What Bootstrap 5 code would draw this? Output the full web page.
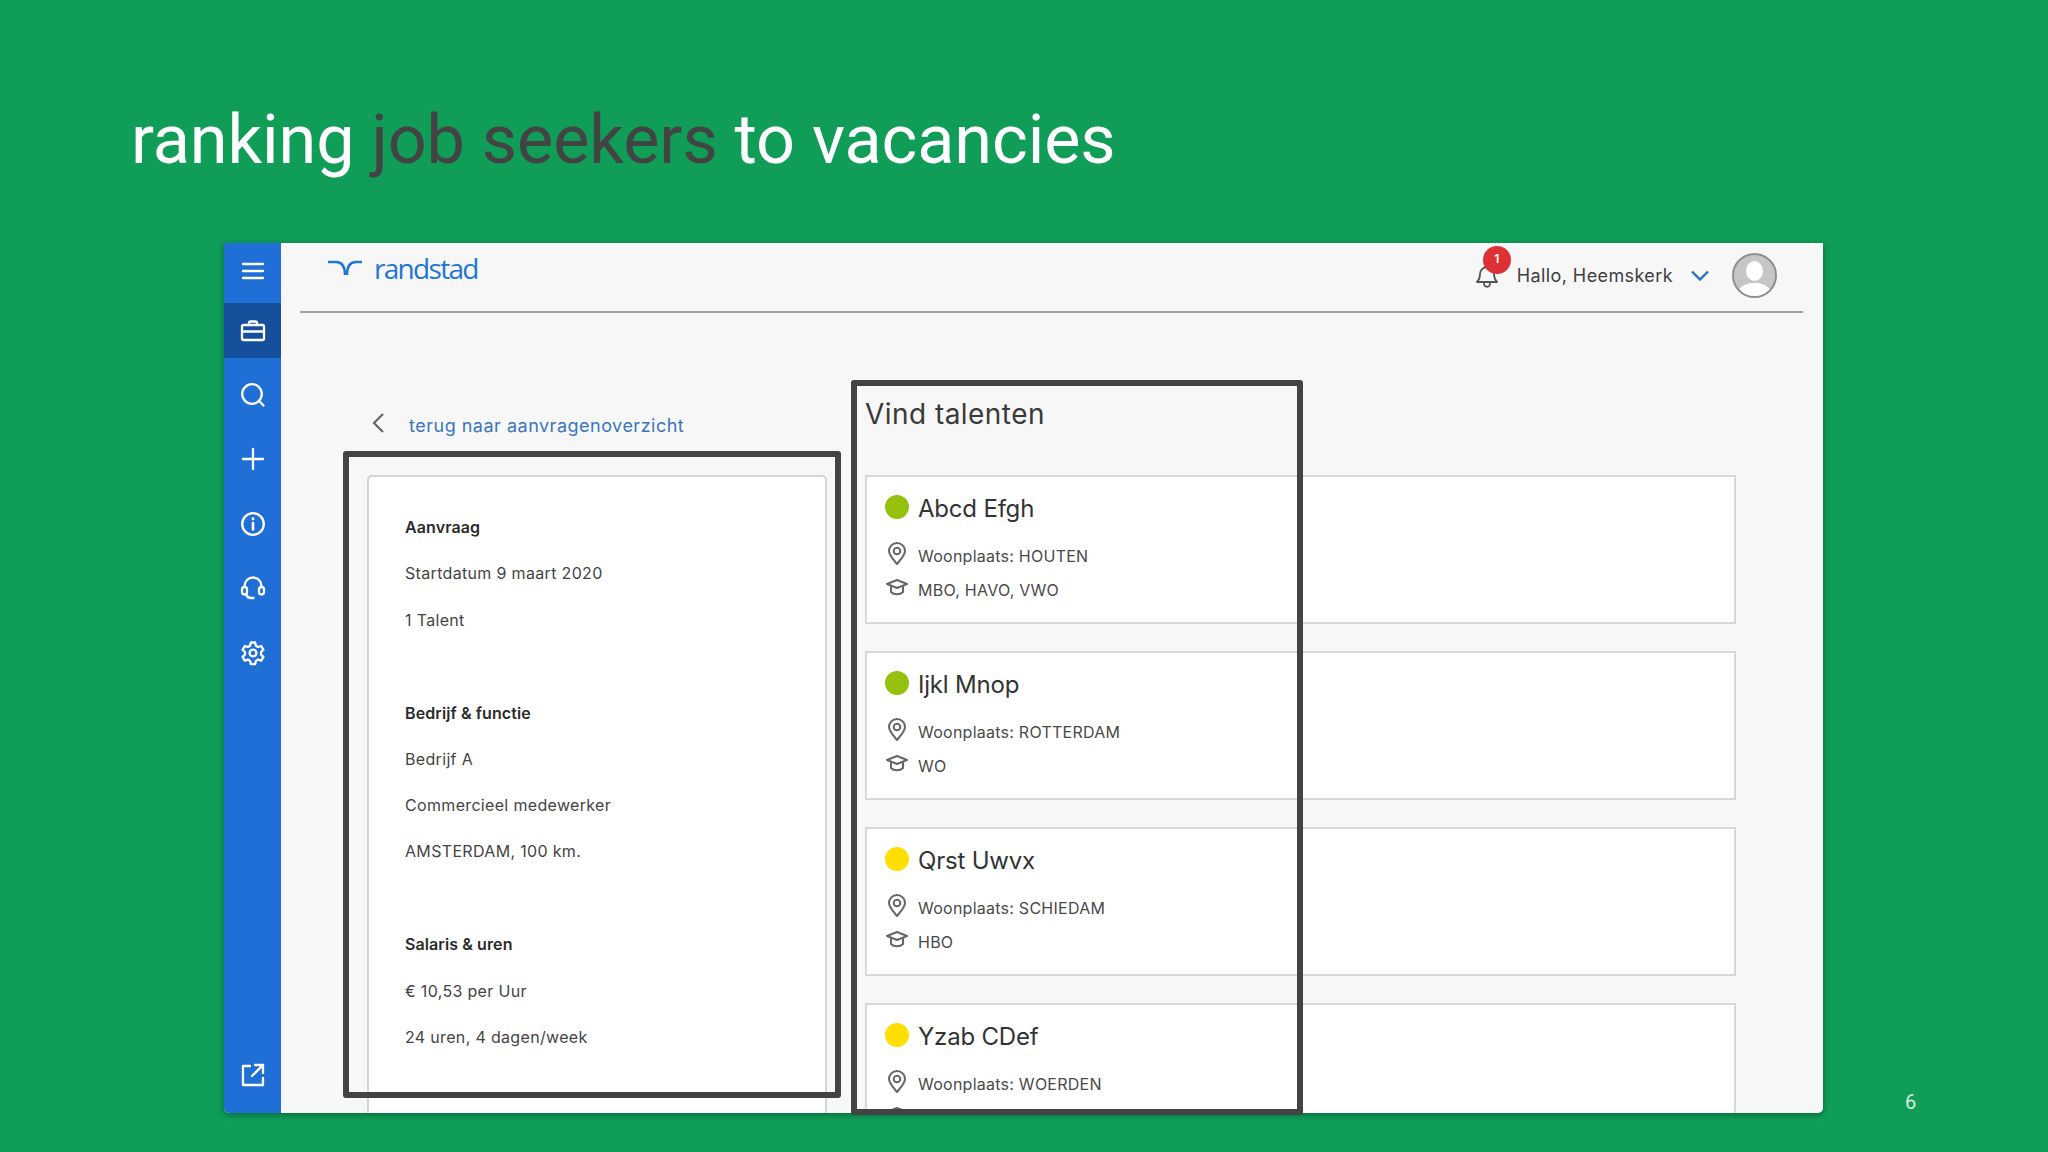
<!DOCTYPE html>
<html lang="nl">
<head>
<meta charset="utf-8">
<title>ranking job seekers to vacancies</title>
<link href="https://cdn.jsdelivr.net/npm/bootstrap@5.3.0/dist/css/bootstrap.min.css" rel="stylesheet">
<style>
html,body{margin:0;width:2048px;height:1152px;overflow:hidden}
body{background:#0f9d58;font-family:Inter,"Liberation Sans",sans-serif;color:#444}
.slide-title{font-family:Roboto,"Liberation Sans",sans-serif;font-weight:400;font-size:68.4px;line-height:84px;color:#fff;margin:0;padding:98px 0 0 131px;letter-spacing:-.1px}
.slide-title span{color:#434343}
.stage{padding:61px 0 0 224px;align-items:flex-end}
.win-wrap{position:relative;width:1599px;height:870px;flex:none}
.app-win{width:100%;height:100%;background:#f7f7f7;overflow:hidden;border-radius:0 0 5px 5px;box-shadow:0 2px 6px rgba(0,0,0,.35)}
.side-rail{width:57px;flex:none;background:#1f6fd6}
.rail-item{height:64.5px;flex:none;display:flex;align-items:center;justify-content:center}
.rail-item svg{width:26px;height:26px;fill:none;stroke:#fff;stroke-width:2.3;stroke-linecap:round;stroke-linejoin:round}
.rail-first{height:60px;padding-bottom:4px}
.rail-active{height:55px;background:#15509c}
.rail-second{height:69px;padding-top:5px}
.rail-last{height:76px;margin-top:auto}
.top-strip{height:70px;flex:none;margin:0 20px 0 19px;border-bottom:2px solid #a3a3a3;position:relative}
.brand-mark{margin-left:28px;margin-top:16px;gap:12px}
.brand-word{font-family:"Open Sans","Liberation Sans",sans-serif;font-size:28px;font-weight:500;line-height:30px;color:#2175d9;letter-spacing:-1.7px;margin-top:-6px}
.user-zone{margin-right:-1px;margin-top:9px;height:46px}
.bell-box{position:relative;width:24px;height:26px;margin-right:18px;margin-top:-2px}
.bell-num{position:absolute;left:8px;top:-15px;width:28px;height:28px;border-radius:50%;background:#dc3234;color:#fff;font-size:12px;font-weight:600;text-align:center;line-height:26px}
.hello{font-size:18px;color:#3f3f3f;line-height:24px;margin-right:18px;letter-spacing:.4px;margin-top:2px}
.avatar-ring{width:45px;height:45px;border-radius:50%;background:#c6c6c6;border:2px solid #8f8f8f;overflow:hidden;margin-left:23px;margin-right:27px;flex:none}
.work-area{padding-left:86px;padding-top:65px;gap:38px}
.left-col{width:460px;flex:none}
.right-col{width:871px;flex:none}
.back-row{height:97px;padding:0 0 0 4px}
.back-row a{font-size:18px;color:#3a76bd;text-decoration:none;letter-spacing:.5px;line-height:24px;margin-top:3px}
.back-inner{padding-top:33px;gap:24px}
.info-card{height:720px;border:2px solid #d4d4d4;border-radius:5px;background:#fff;padding:38px 0 0 36px}
.info-card p{font-size:16px;line-height:24px;margin:0 0 22.3px;color:#444;letter-spacing:.33px}
.info-card p.sec{font-weight:600;color:#2b2b2b;letter-spacing:.1px}
.info-card p.gapped{margin-top:69px}
.find-head{height:97px;font-size:28px;line-height:36px;font-weight:400;color:#3a3a3a;margin:0;padding-top:18px;letter-spacing:.45px}
.talent{height:149px;border:2px solid #d8d8d8;border-radius:0;background:#fff;margin-bottom:27px;padding:16px 0 0 18px}
.talent-top{height:32px;gap:9px}
.status-dot{width:24px;height:24px;border-radius:50%;flex:none;margin-top:-4px}
.dot-green{background:#94c00e}
.dot-yellow{background:#ffdf00}
.talent-name{font-size:24px;line-height:32px;color:#333;letter-spacing:-.2px}
.talent-line{height:34px;gap:9px;font-size:16px;color:#4a4a4a;letter-spacing:.25px}
.line-ico{width:24px;flex:none;display:flex;justify-content:center;margin-top:-6px}
.line-ico svg{fill:none;stroke:#666;stroke-width:2}
.first-line{margin-top:14px}
.mark-box{position:absolute;border:6px solid #434343;border-radius:3px;pointer-events:none}
.mark-left{left:119px;top:208px;width:498px;height:647px}
.mark-right{left:627px;top:137px;width:452px;height:735px}
.page-num{font-family:Roboto,"Liberation Sans",sans-serif;font-size:20px;color:#d9efe3;margin-left:82px;margin-bottom:-1px;line-height:24px}
</style>
</head>
<body>
<h1 class="slide-title">ranking <span>job seekers</span> to vacancies</h1>
<div class="stage d-flex">
  <div class="win-wrap">
    <div class="app-win d-flex">
      <nav class="side-rail d-flex flex-column">
        <div class="rail-item rail-first"><svg viewBox="0 0 26 26"><path d="M3 6h20M3 13h20M3 20h20"/></svg></div>
        <div class="rail-item rail-active"><svg viewBox="0 0 26 26"><rect x="2" y="7" width="22" height="15" rx="1.5"/><path d="M9 7V5a1.5 1.5 0 0 1 1.5-1.5h5A1.5 1.5 0 0 1 17 5v2M2 13.5h22"/></svg></div>
        <div class="rail-item rail-second"><svg viewBox="0 0 26 26"><circle cx="12" cy="12" r="9.8"/><path d="M19.3 19.3l4.2 4.2"/></svg></div>
        <div class="rail-item"><svg viewBox="0 0 26 26"><path d="M13 3v20M3 13h20"/></svg></div>
        <div class="rail-item"><svg viewBox="0 0 26 26"><circle cx="13" cy="13" r="10.8"/><path d="M13 12v6.5" stroke-width="2.6"/><path d="M13 7.7v.3" stroke-width="2.8"/></svg></div>
        <div class="rail-item"><svg viewBox="0 0 26 26"><path d="M4.5 12V11a8.5 8.5 0 0 1 17 0v1"/><rect x="2" y="12" width="5" height="7.5" rx="2.4"/><rect x="19" y="12" width="5" height="7.5" rx="2.4"/><path d="M6.5 19.5c.3 2.7 2.5 3.5 5 3.5h2"/></svg></div>
        <div class="rail-item"><svg viewBox="0 0 26 26"><circle cx="13" cy="13" r="3.4"/><path d="M10.8 2.5h4.4l.7 3.2 2.2 1.3 3.1-1 2.2 3.8-2.4 2.2v2.6l2.4 2.2-2.2 3.8-3.1-1-2.2 1.3-.7 3.2h-4.4l-.7-3.2-2.2-1.3-3.1 1-2.2-3.8 2.4-2.2v-2.6L2.6 9.8l2.2-3.8 3.1 1 2.2-1.3z"/></svg></div>
        <div class="rail-item rail-last"><svg viewBox="0 0 26 26"><path d="M10 4H3v19h20v-7M15 3h8v8M23 3L12 14"/></svg></div>
      </nav>
      <main class="flex-grow-1 d-flex flex-column overflow-hidden">
        <header class="top-strip d-flex justify-content-between">
          <div class="brand-mark d-flex align-items-start">
            <svg width="34" height="17" viewBox="0 0 34 17" fill="none" stroke="#2175d9" stroke-width="2.4"><path d="M0 3h8c6 0 9 4 9 13"/><path d="M34 3h-6c-6 0-9 4-9 13"/></svg>
            <span class="brand-word">randstad</span>
          </div>
          <div class="user-zone d-flex align-items-center">
            <div class="bell-box">
              <svg width="24" height="26" viewBox="0 0 24 26" fill="none" stroke="#555" stroke-width="1.8" stroke-linejoin="round"><path d="M2 20c2-2 3-4 3-8a7 7 0 0 1 14 0c0 4 1 6 3 8z"/><path d="M9 21c0 5 6 5 6 0"/></svg>
              <div class="bell-num">1</div>
            </div>
            <span class="hello">Hallo, Heemskerk</span>
            <svg width="18" height="11" viewBox="0 0 18 11" fill="none" stroke="#2b6fc4" stroke-width="2.4"><path d="M1 1.5l8 8 8-8"/></svg>
            <div class="avatar-ring">
              <svg width="41" height="41" viewBox="0 0 41 41" fill="#fff"><ellipse cx="20.5" cy="16" rx="8.5" ry="10"/><path d="M3 41c1-10 8-11 13-13h9c5 2 12 3 13 13z"/></svg>
            </div>
          </div>
        </header>
        <div class="work-area d-flex">
          <section class="left-col">
            <div class="back-row">
              <div class="back-inner d-flex align-items-center">
                <svg width="14" height="22" viewBox="0 0 14 22" fill="none" stroke="#666" stroke-width="2.2" class="mb-1"><path d="M12 2L3 11l9 9"/></svg>
                <a href="#">terug naar aanvragenoverzicht</a>
              </div>
            </div>
            <div class="info-card">
              <p class="sec">Aanvraag</p>
              <p>Startdatum 9 maart 2020</p>
              <p>1 Talent</p>
              <p class="sec gapped">Bedrijf &amp; functie</p>
              <p>Bedrijf A</p>
              <p>Commercieel medewerker</p>
              <p>AMSTERDAM, 100 km.</p>
              <p class="sec gapped">Salaris &amp; uren</p>
              <p>€ 10,53 per Uur</p>
              <p>24 uren, 4 dagen/week</p>
            </div>
          </section>
          <section class="right-col">
            <h2 class="find-head">Vind talenten</h2>

            <article class="talent">
              <div class="talent-top d-flex align-items-center"><span class="status-dot dot-green"></span><span class="talent-name">Abcd Efgh</span></div>
              <div class="talent-line first-line d-flex align-items-center"><span class="line-ico"><svg width="20" height="24" viewBox="0 0 20 24"><path d="M10 23C6 18 2 14 2 10a8 8 0 0 1 16 0c0 4-4 8-8 13z"/><circle cx="10" cy="10" r="3.3"/></svg></span>Woonplaats: HOUTEN</div>
              <div class="talent-line d-flex align-items-center"><span class="line-ico"><svg width="24" height="17" viewBox="0 0 24 17"><path d="M12 1L2 5l10 4 10-4zM6 7v6c3 3 9 3 12 0V7" stroke-linejoin="round"/></svg></span>MBO, HAVO, VWO</div>
            </article>

            <article class="talent">
              <div class="talent-top d-flex align-items-center"><span class="status-dot dot-green"></span><span class="talent-name">Ijkl Mnop</span></div>
              <div class="talent-line first-line d-flex align-items-center"><span class="line-ico"><svg width="20" height="24" viewBox="0 0 20 24"><path d="M10 23C6 18 2 14 2 10a8 8 0 0 1 16 0c0 4-4 8-8 13z"/><circle cx="10" cy="10" r="3.3"/></svg></span>Woonplaats: ROTTERDAM</div>
              <div class="talent-line d-flex align-items-center"><span class="line-ico"><svg width="24" height="17" viewBox="0 0 24 17"><path d="M12 1L2 5l10 4 10-4zM6 7v6c3 3 9 3 12 0V7" stroke-linejoin="round"/></svg></span>WO</div>
            </article>

            <article class="talent">
              <div class="talent-top d-flex align-items-center"><span class="status-dot dot-yellow"></span><span class="talent-name">Qrst Uwvx</span></div>
              <div class="talent-line first-line d-flex align-items-center"><span class="line-ico"><svg width="20" height="24" viewBox="0 0 20 24"><path d="M10 23C6 18 2 14 2 10a8 8 0 0 1 16 0c0 4-4 8-8 13z"/><circle cx="10" cy="10" r="3.3"/></svg></span>Woonplaats: SCHIEDAM</div>
              <div class="talent-line d-flex align-items-center"><span class="line-ico"><svg width="24" height="17" viewBox="0 0 24 17"><path d="M12 1L2 5l10 4 10-4zM6 7v6c3 3 9 3 12 0V7" stroke-linejoin="round"/></svg></span>HBO</div>
            </article>

            <article class="talent">
              <div class="talent-top d-flex align-items-center"><span class="status-dot dot-yellow"></span><span class="talent-name">Yzab CDef</span></div>
              <div class="talent-line first-line d-flex align-items-center"><span class="line-ico"><svg width="20" height="24" viewBox="0 0 20 24"><path d="M10 23C6 18 2 14 2 10a8 8 0 0 1 16 0c0 4-4 8-8 13z"/><circle cx="10" cy="10" r="3.3"/></svg></span>Woonplaats: WOERDEN</div>
              <div class="talent-line d-flex align-items-center"><span class="line-ico"><svg width="24" height="17" viewBox="0 0 24 17"><path d="M12 1L2 5l10 4 10-4zM6 7v6c3 3 9 3 12 0V7" stroke-linejoin="round"/></svg></span></div>
            </article>
          </section>
        </div>
      </main>
    </div>
    <div class="mark-box mark-left"></div>
    <div class="mark-box mark-right"></div>
  </div>
  <div class="page-num">6</div>
</div>
<script src="https://cdn.jsdelivr.net/npm/bootstrap@5.3.0/dist/js/bootstrap.bundle.min.js"></script>
</body>
</html>
